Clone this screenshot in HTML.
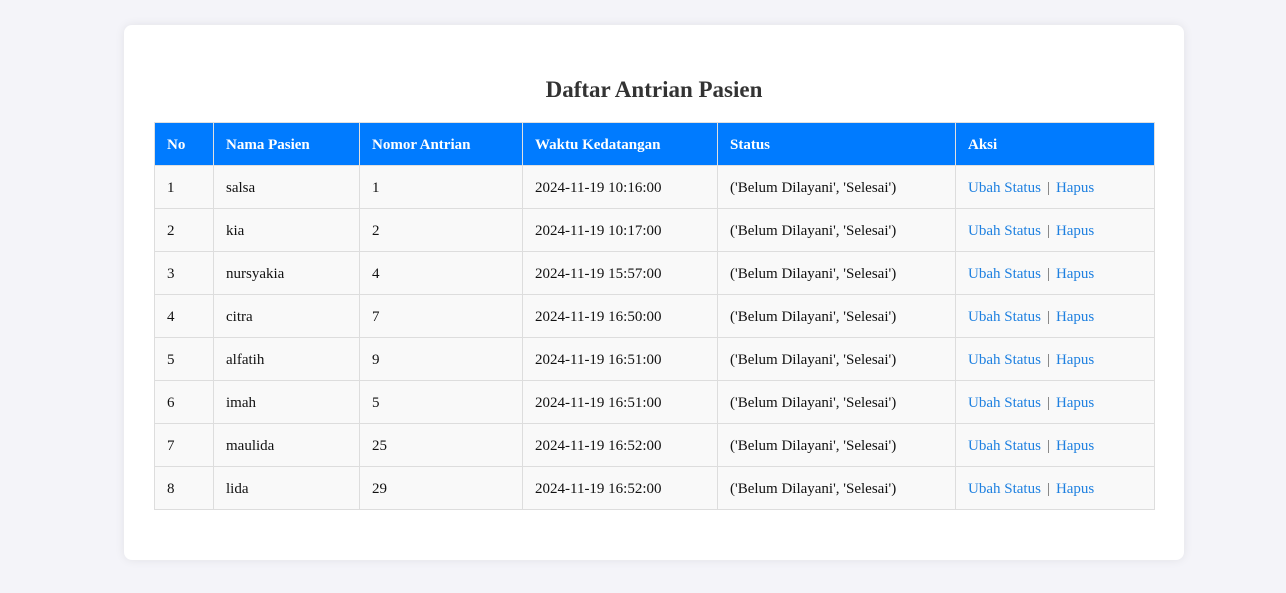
<!DOCTYPE html>
<html><head><meta charset="utf-8"><style>
html,body{margin:0;padding:0}
body{background:#f4f4f9;width:1286px;height:593px;font-family:"Liberation Serif",serif;overflow:hidden}
.card{position:absolute;left:124px;top:25px;width:1060px;height:535px;background:#fff;border-radius:8px;box-shadow:0 0 10px rgba(0,0,0,0.08)}
h2{position:absolute;left:0;right:0;top:50px;margin:0;text-align:center;font-size:23px;font-weight:bold;color:#333;line-height:30px}
table{position:absolute;left:30px;top:97px;border-collapse:collapse;width:1000px;table-layout:fixed}
th,td{border:1px solid #ddd;text-align:left;padding:2px 12px 0;font-size:15px}
th{background:#007bff;color:#fff;height:40px;border-color:#e0e0e0;font-weight:bold}
td{height:40px;background:#f9f9f9;color:#111}
a{color:#1e80e0;text-decoration:none}
.sep{color:#666;margin:0 6px}
</style></head><body>
<div class="card">
<h2>Daftar Antrian Pasien</h2>
<table>
<colgroup><col style="width:59px"><col style="width:146px"><col style="width:163px"><col style="width:195px"><col style="width:238px"><col style="width:199px"></colgroup>
<tr><th>No</th><th>Nama Pasien</th><th>Nomor Antrian</th><th>Waktu Kedatangan</th><th>Status</th><th>Aksi</th></tr>
<tr><td>1</td><td>salsa</td><td>1</td><td>2024-11-19 10:16:00</td><td>('Belum Dilayani', 'Selesai')</td><td><a>Ubah Status</a><span class="sep">|</span><a>Hapus</a></td></tr>
<tr><td>2</td><td>kia</td><td>2</td><td>2024-11-19 10:17:00</td><td>('Belum Dilayani', 'Selesai')</td><td><a>Ubah Status</a><span class="sep">|</span><a>Hapus</a></td></tr>
<tr><td>3</td><td>nursyakia</td><td>4</td><td>2024-11-19 15:57:00</td><td>('Belum Dilayani', 'Selesai')</td><td><a>Ubah Status</a><span class="sep">|</span><a>Hapus</a></td></tr>
<tr><td>4</td><td>citra</td><td>7</td><td>2024-11-19 16:50:00</td><td>('Belum Dilayani', 'Selesai')</td><td><a>Ubah Status</a><span class="sep">|</span><a>Hapus</a></td></tr>
<tr><td>5</td><td>alfatih</td><td>9</td><td>2024-11-19 16:51:00</td><td>('Belum Dilayani', 'Selesai')</td><td><a>Ubah Status</a><span class="sep">|</span><a>Hapus</a></td></tr>
<tr><td>6</td><td>imah</td><td>5</td><td>2024-11-19 16:51:00</td><td>('Belum Dilayani', 'Selesai')</td><td><a>Ubah Status</a><span class="sep">|</span><a>Hapus</a></td></tr>
<tr><td>7</td><td>maulida</td><td>25</td><td>2024-11-19 16:52:00</td><td>('Belum Dilayani', 'Selesai')</td><td><a>Ubah Status</a><span class="sep">|</span><a>Hapus</a></td></tr>
<tr><td>8</td><td>lida</td><td>29</td><td>2024-11-19 16:52:00</td><td>('Belum Dilayani', 'Selesai')</td><td><a>Ubah Status</a><span class="sep">|</span><a>Hapus</a></td></tr>
</table>
</div>
</body></html>
